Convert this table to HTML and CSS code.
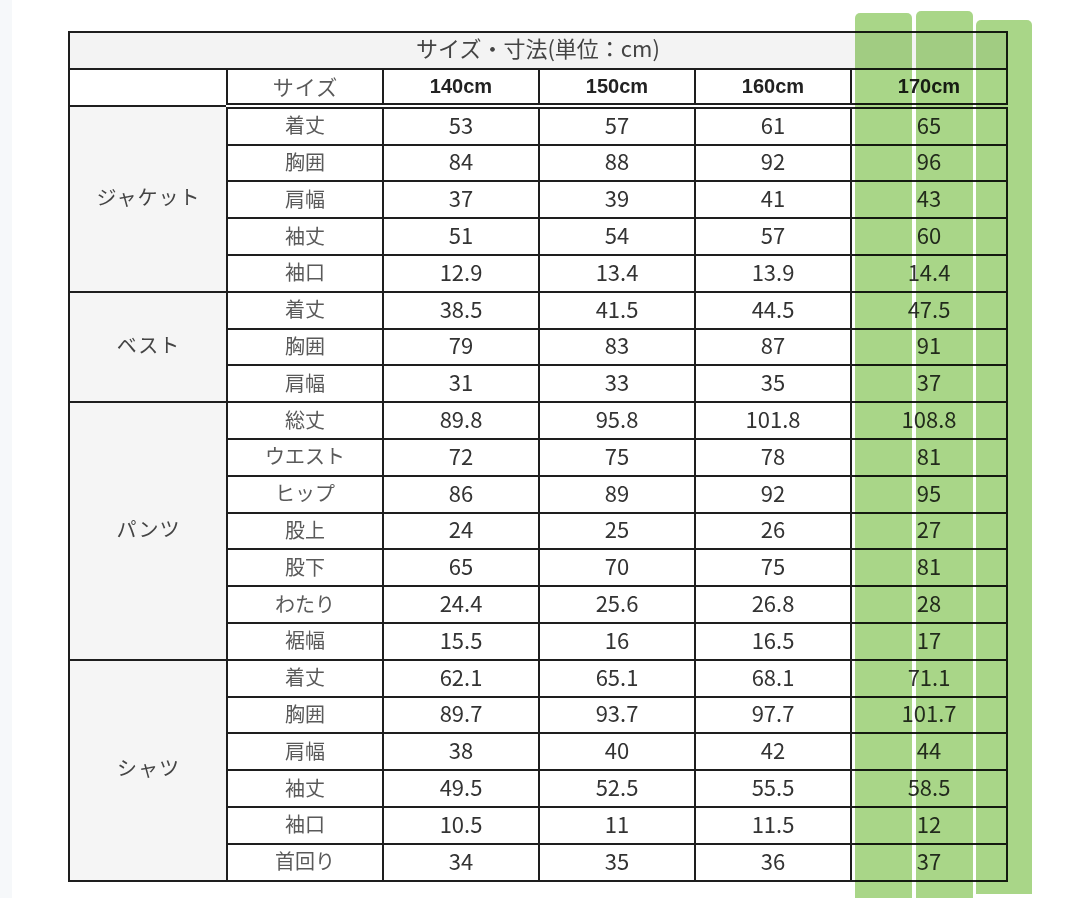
FILE: index.html
```html
<!DOCTYPE html>
<html lang="ja">
<head>
<meta charset="utf-8">
<link rel="stylesheet" href="styles.css">
</head>
<body>
<div class="page">
  <div class="edge"></div>
  <div class="wrap">
    <table class="size-table">
      <colgroup>
        <col class="c-cat"><col class="c-item"><col class="c-val"><col class="c-val"><col class="c-val"><col class="c-val">
      </colgroup>
      <tr class="title-row"><td colspan="6">サイズ・寸法(単位：cm)</td></tr>
      <tr class="head-row">
        <td class="blank"></td>
        <td class="item head-item">サイズ</td>
        <td class="hv">140cm</td><td class="hv">150cm</td><td class="hv">160cm</td><td class="hv">170cm</td>
      </tr>
      <tr><td class="cat" rowspan="5">ジャケット</td><td class="item">着丈</td><td>53</td><td>57</td><td>61</td><td>65</td></tr>
      <tr><td class="item">胸囲</td><td>84</td><td>88</td><td>92</td><td>96</td></tr>
      <tr><td class="item">肩幅</td><td>37</td><td>39</td><td>41</td><td>43</td></tr>
      <tr><td class="item">袖丈</td><td>51</td><td>54</td><td>57</td><td>60</td></tr>
      <tr><td class="item">袖口</td><td>12.9</td><td>13.4</td><td>13.9</td><td>14.4</td></tr>
      <tr><td class="cat" rowspan="3">ベスト</td><td class="item">着丈</td><td>38.5</td><td>41.5</td><td>44.5</td><td>47.5</td></tr>
      <tr><td class="item">胸囲</td><td>79</td><td>83</td><td>87</td><td>91</td></tr>
      <tr><td class="item">肩幅</td><td>31</td><td>33</td><td>35</td><td>37</td></tr>
      <tr><td class="cat" rowspan="7">パンツ</td><td class="item">総丈</td><td>89.8</td><td>95.8</td><td>101.8</td><td>108.8</td></tr>
      <tr><td class="item">ウエスト</td><td>72</td><td>75</td><td>78</td><td>81</td></tr>
      <tr><td class="item">ヒップ</td><td>86</td><td>89</td><td>92</td><td>95</td></tr>
      <tr><td class="item">股上</td><td>24</td><td>25</td><td>26</td><td>27</td></tr>
      <tr><td class="item">股下</td><td>65</td><td>70</td><td>75</td><td>81</td></tr>
      <tr><td class="item">わたり</td><td>24.4</td><td>25.6</td><td>26.8</td><td>28</td></tr>
      <tr><td class="item">裾幅</td><td>15.5</td><td>16</td><td>16.5</td><td>17</td></tr>
      <tr><td class="cat" rowspan="6">シャツ</td><td class="item">着丈</td><td>62.1</td><td>65.1</td><td>68.1</td><td>71.1</td></tr>
      <tr><td class="item">胸囲</td><td>89.7</td><td>93.7</td><td>97.7</td><td>101.7</td></tr>
      <tr><td class="item">肩幅</td><td>38</td><td>40</td><td>42</td><td>44</td></tr>
      <tr><td class="item">袖丈</td><td>49.5</td><td>52.5</td><td>55.5</td><td>58.5</td></tr>
      <tr><td class="item">袖口</td><td>10.5</td><td>11</td><td>11.5</td><td>12</td></tr>
      <tr><td class="item">首回り</td><td>34</td><td>35</td><td>36</td><td>37</td></tr>
    </table>
    <div class="marker m1"></div>
    <div class="marker m2"></div>
    <div class="marker m3"></div>
  </div>
</div>
</body>
</html>
```
FILE: styles.css
```css
html, body {
  margin: 0;
  padding: 0;
  background: #fff;
}
.page {
  position: relative;
  width: 1080px;
  height: 898px;
  overflow: hidden;
  font-family: "Noto Sans CJK JP", "Noto Sans", sans-serif;
}
.edge {
  position: absolute;
  left: 0;
  top: 0;
  width: 12px;
  height: 898px;
  background: #f6f8fa;
}
.wrap {
  padding: 31px 0 0 68px;
}
.size-table {
  border-collapse: collapse;
  table-layout: fixed;
  width: 940px;
  color: #333;
}
.c-cat { width: 158px; }
.c-item { width: 156px; }
.c-val { width: 156px; }
.size-table td {
  border: 2px solid #1e1e1e;
  height: 29.8px;
  padding: 0 0 5px 0;
  text-align: center;
  vertical-align: middle;
  font-size: 22px;
  line-height: 24px;
  background: #fff;
}
.title-row td {
  background: #f3f3f3;
  font-size: 22px;
  color: #444;
  height: 28.8px;
  padding-bottom: 6px;
}
.head-row td {
  height: 33px;
  padding-bottom: 0;
  border-bottom: 6px double #1e1e1e;
}
.head-row td.blank {
  border-bottom: 2px solid #1e1e1e;
}
.head-row td.hv {
  font-weight: bold;
  font-family: "Liberation Sans", "Noto Sans CJK JP", sans-serif;
  font-size: 20px;
  color: #222;
}
.size-table td.item {
  font-size: 20px;
  color: #5a5a5a;
  height: 32.8px;
  padding-bottom: 2px;
}
.size-table td.head-item {
  font-size: 21px;
  letter-spacing: 1px;
  padding-left: 1px;
  height: 33px;
  padding-bottom: 0;
}
.size-table td.cat {
  background: #f5f5f5;
  font-size: 20px;
  letter-spacing: 1px;
  padding-left: 1px;
  padding-bottom: 4px;
  height: auto;
  color: #444;
}
.marker {
  position: absolute;
  background: rgb(165, 212, 130);
  mix-blend-mode: multiply;
  border-radius: 5px 5px 0 0;
  opacity: 0.95;
}
.m1 { left: 855px; top: 13px; width: 57px; height: 890px; }
.m2 { left: 916px; top: 11px; width: 57px; height: 892px; }
.m3 { left: 976px; top: 20px; width: 56px; height: 874px; }
```
